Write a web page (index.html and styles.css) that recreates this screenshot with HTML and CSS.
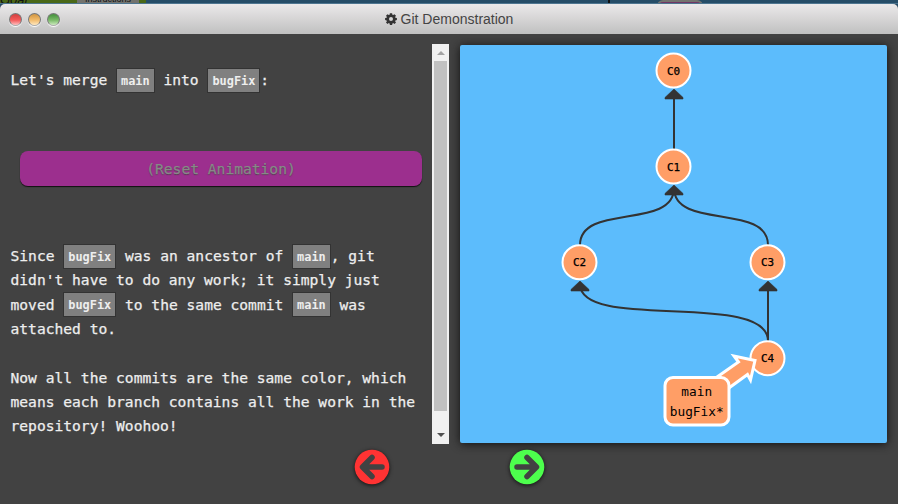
FILE: index.html
```html
<!DOCTYPE html>
<html lang="en">
<head>
<meta charset="utf-8">
<title>Git Demonstration</title>
<link rel="stylesheet" href="styles.css">
</head>
<body>
<div class="backdrop">
  <div class="back-goal"><span>Goal</span></div>
  <div class="back-button"><span>Instructions</span></div>
  <div class="back-edge"></div>
  <div class="back-tree"><i class="back-line"></i><i class="back-node"></i></div>
</div>
<main class="window">
  <header class="titlebar">
    <div class="lights"><i class="light red"></i><i class="light amber"></i><i class="light green"></i></div>
    <h1 class="title">
      <svg class="gear" viewBox="0 0 12 12" width="12" height="12"><path fill="#333" fill-rule="evenodd" d="M4.9 0.2h2.2l.3 1.6 .8.3 1.3-.9 1.5 1.5-.9 1.3.3.8 1.5.2v2.1l-1.5.3-.3.8.9 1.3-1.5 1.5-1.3-.9-.8.3-.3 1.5H4.9l-.3-1.5-.8-.3-1.3.9L1 9.500l.9-1.300-.3-.8L.1 7.100V5l1.500-.2.300-.8L1 2.700 2.500 1.200l1.300.9.800-.300zM6 4a2 2 0 1 0 0 4a2 2 0 0 0 0-4z"/></svg>
      <span>Git Demonstration</span>
    </h1>
  </header>
  <div class="content">
    <section class="lesson">
      <div class="prose">
        <p class="intro">Let's merge <code>main</code> into <code>bugFix</code>:</p>
        <button class="reset">(Reset Animation)</button>
        <p>Since <code>bugFix</code> was an ancestor of <code>main</code>, git<br>didn't have to do any work; it simply just<br>moved <code>bugFix</code> to the same commit <code>main</code> was<br>attached to.</p>
        <p>Now all the commits are the same color, which<br>means each branch contains all the work in the<br>repository! Woohoo!</p>
      </div>
      <div class="scrollbar"><i class="up"></i><i class="thumb"></i><i class="down"></i></div>
    </section>
    <svg class="graph" viewBox="460 45 427 398" width="427" height="398">
      <g class="edges">
        <path d="M674 149V97"/>
        <path d="M580 245C580 203 674 230 674 188"/>
        <path d="M768 245C768 203 674 230 674 188"/>
        <path d="M768 341C768 290 580 332 580 284"/>
        <path d="M768 341V290"/>
      </g>
      <g class="heads">
        <path d="M674 89l9 8.500v1.500h-18v-1.500z"/>
        <path d="M674 185l9 8.500v1.500h-18v-1.500z"/>
        <path d="M580 281l9 8.500v1.500h-18v-1.500z"/>
        <path d="M768 281l9 8.500v1.500h-18v-1.500z"/>
      </g>
      <g class="commits">
        <circle cx="673.500" cy="70.500" r="17"/><text x="673.500" y="74.700">C0</text>
        <circle cx="673.500" cy="166.500" r="17"/><text x="673.500" y="170.700">C1</text>
        <circle cx="579.500" cy="262.300" r="17"/><text x="579.500" y="266.400">C2</text>
        <circle cx="767.500" cy="262.300" r="17"/><text x="767.500" y="266.400">C3</text>
        <circle cx="767.500" cy="358.200" r="17"/><text x="767.500" y="362.400">C4</text>
      </g>
      <g class="branch">
        <path d="M755 360.500L734 356L738.500 362L710 382L722 393L747.500 374.500L750.500 380z"/>
        <rect x="665" y="377.500" width="64" height="47.500" rx="8"/>
        <text x="696.700" y="396">main</text>
        <text x="696.700" y="415.500">bugFix*</text>
      </g>
    </svg>
  </div>
  <footer class="controls">
    <svg class="nav" viewBox="0 0 36 36" width="36" height="36"><circle cx="18" cy="18" r="17.300" fill="#ff3333"/><path d="M18 8.500L8.500 18l9.500 9.500M9 18h19" class="arrow"/></svg>
    <svg class="nav" viewBox="0 0 36 36" width="36" height="36"><circle cx="18" cy="18" r="17.300" fill="#4dff4d"/><path d="M18 8.500L27.500 18l-9.500 9.500M27 18H8" class="arrow"/></svg>
  </footer>
</main>
</body>
</html>
```
FILE: styles.css
```css
* { box-sizing: border-box; }
body {
  margin: 0;
  height: 504px;
  overflow: hidden;
  background: #264d68;
  font-family: "DejaVu Sans Mono", monospace;
}
.backdrop { display: flex; height: 4px; overflow: hidden; font: 11px/11px "Liberation Sans", sans-serif; color: #111; border-bottom: 1px solid #4d7590; }
.back-goal { width: 77px; background: #4a6818; }
.back-goal span { display: block; margin-top: -6px; font-size: 13px; font-style: italic; }
.back-button span { display: block; margin-top: -6px; }
.back-button { width: 62px; background: #73736f; text-align: center; font-size: 9px; }
.back-edge { width: 7px; background: #4a6818; }
.back-tree { flex: 1; display: flex; }
.back-line { width: 2px; margin-left: 462px; background: #111; }
.back-node { width: 46px; height: 12px; margin-left: 47px; border: 2px solid #73736f; border-radius: 6px; background: #703565; }

.window { height: 500px; border-radius: 5px 5px 0 0; background: #424242; overflow: hidden; }
.titlebar { display: grid; grid-template-columns: 100px 1fr 100px; height: 30px; background: linear-gradient(#ebe9ea, #c0c0c0); }
.lights { display: flex; gap: 6px; padding: 9px 0 0 9px; }
.light { width: 13px; height: 13px; border-radius: 50%; border: 1px solid #777; border-bottom-color: #aaa; box-shadow: 0 1px 1px #fff; }
.red { background: linear-gradient(#d84444 10%, #f45a5a 55%, #ffc0c0); }
.amber { background: linear-gradient(#d69b48 10%, #f2bc6d 55%, #ffe8c0); }
.green { background: linear-gradient(#4c9643 10%, #7aba68 55%, #cdebc0); }
.title { display: flex; justify-content: center; align-items: center; gap: 4px; margin: 0; font: 14px/30px "Liberation Sans", Arial, sans-serif; color: #444; }
.gear { margin-top: -1px; }

.content { display: flex; height: 410px; padding-top: 10px; }
.lesson { display: flex; width: 449px; height: 400px; }
.prose { flex: 1; padding: 24px 0 0 10.500px; color: #eee; font-size: 14.620px; line-height: 24.400px; white-space: nowrap; -webkit-text-stroke: 0.250px; }
.prose p { margin: 0 0 24px; }
.prose .intro { margin-bottom: 58.600px; }
code { position: relative; top: -1px; display: inline-block; height: 25px; margin: -3px 0; padding: 0 4px; border: 1px solid #333; background: #808080; font: bold 11.880px/24px "DejaVu Sans Mono", monospace; vertical-align: middle; -webkit-text-stroke: 0; }
.reset { display: block; width: 402px; height: 35px; margin: 0 0 58px 9.500px; padding: 0; border: 0; border-radius: 8px; background: #9c2f8e; box-shadow: 0 1px 1px #111; color: #888; font: 14.620px/35px "DejaVu Sans Mono", monospace; text-shadow: 0 1px 1px #55384f; }
.scrollbar { display: flex; flex-direction: column; align-items: center; width: 17px; background: #f1f1f1; }
.up { margin: 7px 0 6px; border: 4px solid transparent; border-top: 0; border-bottom-color: #a3a3a3; }
.thumb { width: 13px; height: 350px; background: #c1c1c1; }
.down { margin-top: 22px; border: 4px solid transparent; border-bottom: 0; border-top-color: #505050; }

.graph { display: block; margin: 1px 0 0 11px; border-radius: 2px; background: #5cbcfc; box-shadow: 0 1px 10px #111; }
.edges path { fill: none; stroke: #333; stroke-width: 2; }
.heads path { fill: #333; stroke: #333; stroke-width: 0.600; }
.commits circle { fill: #ff9e66; stroke: #fff; stroke-width: 2; }
.graph text { fill: #000; text-anchor: middle; font-size: 10.960px; }
.commits text { stroke: #000; stroke-width: 0.250; }
.branch path, .branch rect { fill: #ff9e66; stroke: #fff; stroke-width: 3; }
.graph .branch text { font-size: 12.790px; }

.controls { display: flex; gap: 118.500px; padding: 5px 0 0 354px; }
.nav { overflow: visible; filter: drop-shadow(0 1px 2px #111); }
.arrow { fill: none; stroke: #424242; stroke-width: 5.500; stroke-linecap: round; stroke-linejoin: round; }
```
